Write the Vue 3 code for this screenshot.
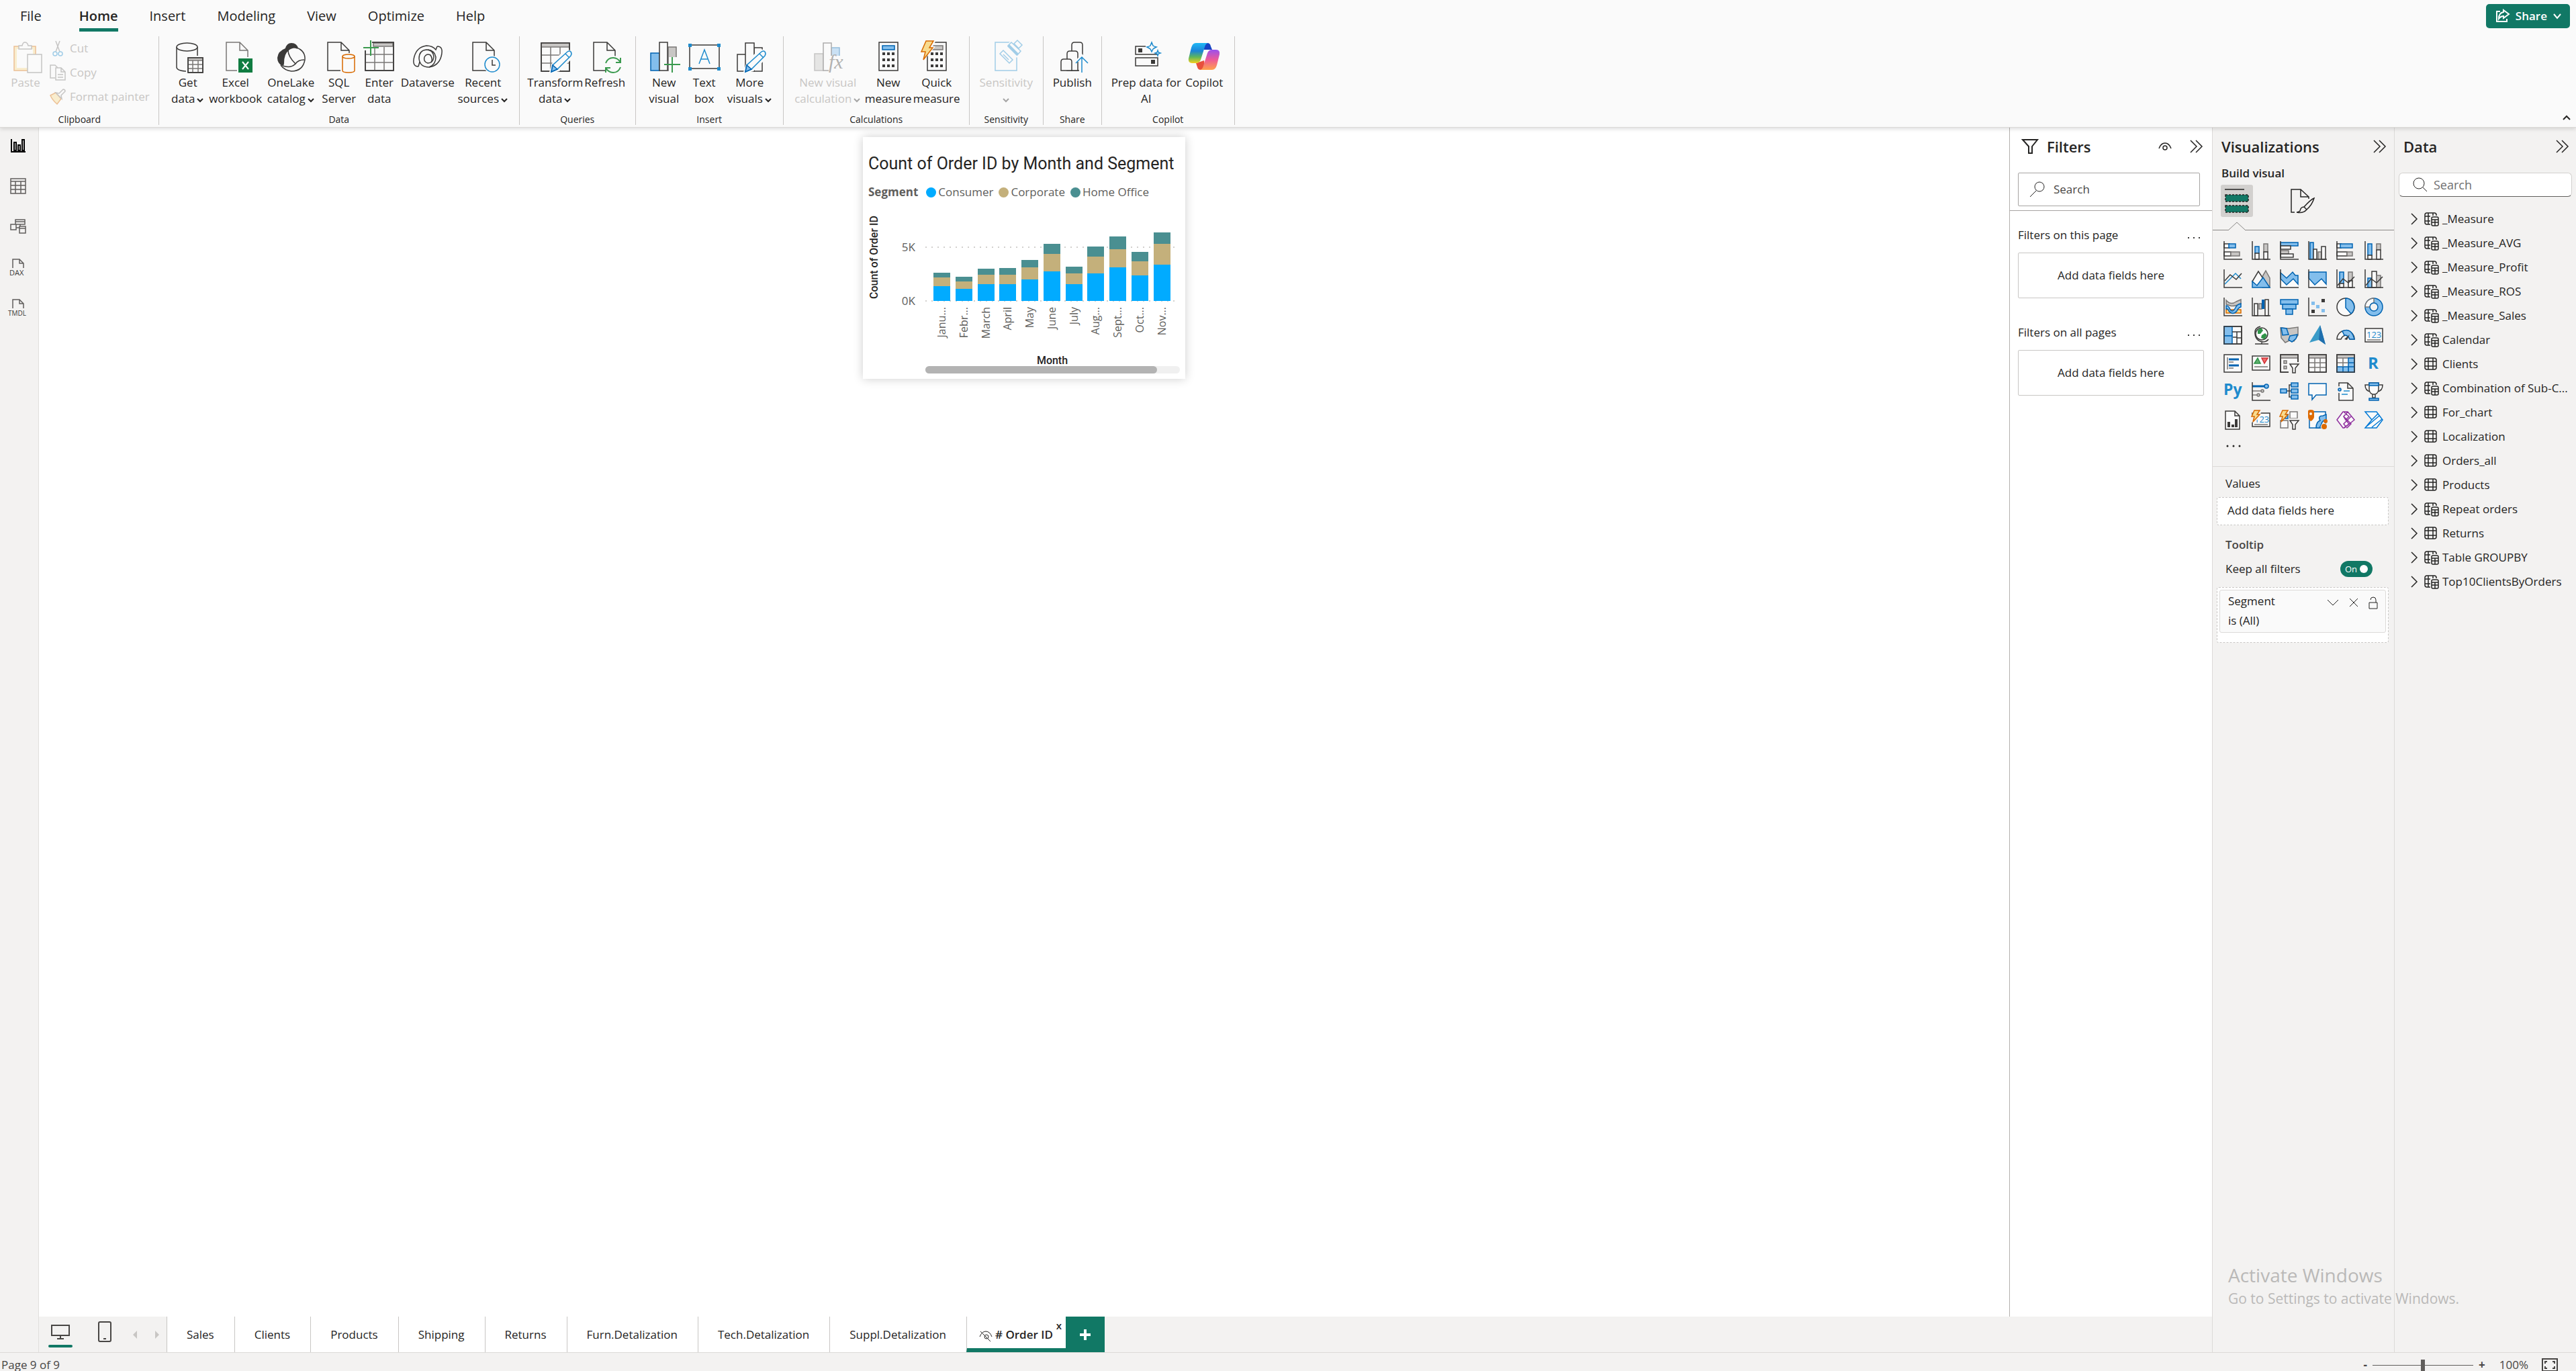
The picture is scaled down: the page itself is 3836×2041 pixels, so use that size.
<script setup>
const rect = (x, y, w, h) => `M${x} ${y}h${w}v${h}h${-w}z`
const circle = (cx, cy, r) => `M${cx - r} ${cy}a${r} ${r} 0 1 0 ${2 * r} 0a${r} ${r} 0 1 0 ${-2 * r} 0z`
const page = (x) => `M${x} 3h20l12 12v30h-32zM${x + 20} 3v12h12`

const menu = ['File', 'Home', 'Insert', 'Modeling', 'View', 'Optimize', 'Help']

const pencil = [
  ['h', 'M14 50L20 32L40 12L51 18L50 26L30 46z'],
  ['bw', 'M18 47L20 37L42 17Q45 15 47 17Q49 20 47 23L27 43z'],
  ['b', 'M18 47L20 37L27 43z'],
  ['bl', 'M39 20L45 26'],
]
const keypad = (x) => [0, 1, 2].flatMap((r) => [0, 1, 2].map((c) => ['k', rect(x + c * 7, 18 + r * 9, 4, 4)]))
const bolt = 'M8 1H19L13 11H18L4 29L7 17H1z'

const groups = [
  {
    name: 'Data', cls: 'data',
    items: [
      { lines: ['Get', 'data'], more: true, icon: [
        ['w', 'M7 10V40Q7 45 20 46H22V24H38V10'], ['w', 'M7 10a15.5 6 0 1 0 31 0a15.5 6 0 1 0 -31 0z'],
        ['h', rect(21, 23, 26, 26)], ['w', rect(24, 26, 22, 22)], ['g', rect(24, 26, 22, 4)], ['gl', 'M24 36H46M24 42H46M31 30V48M39 30V48'], ['l', rect(24, 26, 22, 22)]] },
      { lines: ['Excel', 'workbook'], icon: [
        ['gw', page(10)], ['h', rect(26, 25, 24, 24)], ['xl', rect(28, 27, 21, 21)], ['wl', 'M34 32L43 43M43 32L34 43']] },
      { lines: ['OneLake', 'catalog'], more: true, icon: [
        ['k', 'M4 26Q5 16 16 12Q18 4 25 4Q33 4 35 12Q26 10 21 15Q14 20 14 34Q14 38 11 38Q4 34 4 26z'],
        ['l', 'M33 11Q46 16 45 29Q42 46 25 46Q15 45 9 37M20 15Q20 24 31 35Q35 29 44 29M12 38Q24 42 31 35'],
        ['l', 'M16 12Q26 8 34 12']] },
      { lines: ['SQL', 'Server'], icon: [
        ['w', page(7)], ['h', rect(26, 19, 24, 30)], ['or', 'M29 24V45Q29 48 38 48Q47 48 47 45V24'], ['or', 'M29 24a9 3 0 1 0 18 0a9 3 0 1 0 -18 0z']] },
      { lines: ['Enter', 'data'], icon: [
        ['w', rect(3, 3, 42, 42)], ['g', rect(15, 4, 29, 5)], ['gl', 'M3 21H45M3 33H45M17 10V45M31 10V45'], ['l', rect(3, 3, 42, 42)],
        ['h', rect(-1, -1, 14, 16)], ['gr', 'M11 0V23M0 11H23']] },
      { lines: ['Dataverse'], icon: [
        ['l', 'M38 9Q48 9 44 24Q40 38 26 40Q12 40 11 27Q11 15 22 14Q32 14 33 25Q32 34 24 34Q17 32 19 25'],
        ['l', 'M10 39Q0 39 4 24Q8 10 22 8Q31 8 36 14L38 9M26 40Q36 36 36 25Q34 15 24 14M12 32L10 39M29 33Q32 28 28 22Q22 19 19 25']] },
      { lines: ['Recent', 'sources'], more: true, icon: [
        ['w', page(9)], ['h', circle(38, 36, 13)], ['bw', circle(38, 36, 11)], ['l', 'M38 29V37H43']] },
    ],
  },
  {
    name: 'Queries', cls: 'queries',
    items: [
      { lines: ['Transform', 'data'], more: true, icon: [
        ['w', rect(3, 4, 42, 42)], ['g', rect(3, 4, 42, 6)], ['gl', 'M3 22H45M3 34H45M17 10V46M31 10V46'], ['l', rect(3, 4, 42, 42)], ...pencil] },
      { lines: ['Refresh'], icon: [
        ['w', page(7)], ['h', circle(36, 37, 14)],
        ['gr', 'M25 34Q28 26 36 26Q43 26 47 33M47 26V33H40M47 40Q44 48 36 48Q29 48 25 41M25 48V41H32']] },
    ],
  },
  {
    name: 'Insert', cls: 'insert',
    items: [
      { lines: ['New', 'visual'], icon: [
        ['b', rect(4, 19, 13, 26)], ['g', rect(30, 10, 12, 35)], ['w', rect(17, 3, 12, 42)], ['h', rect(31, 25, 17, 24)], ['gr', 'M36 25V48M24 36H48']] },
      { lines: ['Text', 'box'], icon: [
        ['w', rect(2, 7, 44, 35)], ['bf', rect(0, 5, 5, 5)], ['bf', rect(43, 5, 5, 5)], ['bf', rect(0, 40, 5, 5)], ['bf', rect(43, 40, 5, 5)],
        ['bl', 'M16 35L24 14L32 35M19 28H29']] },
      { lines: ['More', 'visuals'], more: true, icon: [
        ['w', rect(6, 21, 13, 25)], ['w', rect(31, 11, 12, 35)], ['w', rect(18, 4, 13, 42)], ...pencil] },
    ],
  },
  {
    name: 'Calculations', cls: 'calculations',
    items: [
      { lines: ['New visual', 'calculation'], more: true, disabled: true, icon: [
        ['g', rect(4, 20, 13, 25)], ['b', rect(29, 11, 12, 18)], ['w', rect(17, 4, 12, 41)], ['h', rect(25, 23, 22, 26)], ['fx', 'fx', 25, 42, 30]] },
      { lines: ['New', 'measure'], icon: [['w', rect(10, 3, 28, 42)], ['b', rect(15, 8, 18, 6)], ...keypad(15)] },
      { lines: ['Quick', 'measure'], icon: [
        ['w', rect(10, 3, 28, 42)], ['g', rect(15, 8, 18, 6)], ...keypad(15), ['h', 'M6 -2H24L18 9H22L2 33H-2V16z'], ['oy', bolt]] },
    ],
  },
  {
    name: 'Sensitivity', cls: 'sensitivity',
    items: [
      { lines: ['Sensitivity', ''], more: true, disabled: true, icon: [
        ['bw', rect(8, 3, 32, 42)], ['h', 'M24 8L34 -2L52 14L40 26z'], ['bw', 'M15 20L20 15L34 29L29 34z'], ['bl', 'M20 21L28 29'],
        ['bw', 'M27 8L32 3L46 16L41 22z'], ['bf', 'M26 9L29 6L43 20L40 23z'], ['bw', 'M36 5L41 0L48 7L43 12z']] },
    ],
  },
  {
    name: 'Share', cls: 'share',
    items: [
      { lines: ['Publish'], icon: [
        ['w', 'M23 45V7Q23 3 27 3H35Q39 3 39 7V45z'], ['w', 'M16 45V20Q16 16 20 16H28Q32 16 32 20V45z'], ['w', 'M7 45V32Q7 28 11 28H19Q23 28 23 32V45z'],
        ['h', 'M38 20L50 32V48H34V32H27z'], ['bl', 'M38 25V48M29 34L38 25L47 34']] },
    ],
  },
  {
    name: 'Copilot', cls: 'copilot',
    items: [
      { lines: ['Prep data for', 'AI'], icon: [
        ['w', rect(8, 9, 32, 12)], ['w', rect(8, 26, 33, 12)], ['k', rect(12, 12, 6, 6)], ['k', rect(31, 29, 6, 6)], ['h', rect(23, 0, 26, 19)],
        ['bw', 'M32 3L34 8Q35 9 39 10Q35 12 34 13L32 17L30 13Q29 12 25 10Q29 9 30 8z'], ['bw', 'M41 15L42 18L45 19L42 20L41 23L40 20L37 19L40 18z']] },
      { lines: ['Copilot'], copilot: true },
    ],
  },
]

const clip = [
  ['Cut', [['gl', 'M9 1L15 17M15 1L9 17'], ['bl', circle(8, 20, 3)], ['bl', circle(16, 20, 3)]]],
  ['Copy', [['gl', 'M8 20H1V1H8L12 5'], ['gw', 'M9 5H17L23 11V23H9zM17 5V11H23M12 15H20M12 19H20']]],
  ['Format painter', [['oy', 'M1 10L9 6L17 15L11 23Q4 17 1 10z'], ['gw', 'M9 6L14 7L20 1Q23 1 23 4L17 10L18 15z']]],
]

const axis = ['l', 'M1 0V27H28']
const vizIcons = [
  ['Stacked bar chart', [['w', rect(1, 4, 8, 6)], ['b', rect(8, 4, 10, 6)], ['w', rect(1, 16, 10, 6)], ['g', rect(11, 16, 13, 6)], axis]],
  ['Stacked column chart', [['b', rect(5, 8, 6, 10)], ['w', rect(5, 18, 6, 9)], ['g', rect(18, 4, 6, 12)], ['w', rect(18, 16, 6, 11)], axis]],
  ['Clustered bar chart', [['b', rect(1, 2, 26, 5)], ['w', rect(1, 7, 15, 5)], ['g', rect(1, 14, 12, 5)], ['w', rect(1, 19, 19, 5)], axis]],
  ['Clustered column chart', [['b', rect(3, 2, 5, 25)], ['w', rect(8, 12, 5, 15)], ['g', rect(15, 16, 5, 11)], ['w', rect(20, 8, 6, 19)], axis]],
  ['100% stacked bar chart', [['w', rect(1, 4, 6, 6)], ['b', rect(6, 4, 18, 6)], ['w', rect(1, 16, 15, 6)], ['g', rect(16, 16, 8, 6)], axis]],
  ['100% stacked column chart', [['b', rect(5, 4, 6, 17)], ['w', rect(5, 21, 6, 6)], ['g', rect(18, 4, 6, 9)], ['w', rect(18, 13, 6, 14)], axis]],
  ['Line chart', [['bl', 'M2 22L18 6L26 14'], ['l', 'M2 17L10 8L19 15L27 6'], axis]],
  ['Area chart', [['g', 'M14 14L21 2L27 13V27H16z'], ['w', 'M1 18L10 3L20 18L8 26z'], ['b', 'M1 18L8 24L17 12L27 27H1z']]],
  ['Stacked area chart', [['h', rect(1, 12, 26, 15)], ['b', 'M1 5L10 13L19 4L23 9H27V22L20 14L10 23L1 14z'], axis]],
  ['100% stacked area chart', [['h', rect(1, 12, 26, 15)], ['b', 'M1 4H27V22L20 14L10 23L1 13z'], axis]],
  ['Line and stacked column chart', [['b', rect(5, 4, 6, 17)], ['w', rect(5, 21, 6, 6)], ['g', rect(18, 4, 6, 13)], ['w', rect(18, 17, 6, 10)], ['l', 'M2 24L10 14L18 20L27 11'], axis]],
  ['Line and clustered column chart', [['b', rect(5, 13, 6, 14)], ['w', rect(11, 3, 7, 24)], ['g', rect(18, 9, 6, 18)], ['l', 'M2 24L10 14L18 20L27 11'], axis]],
  ['Ribbon chart', [['oy', rect(4, 18, 22, 5)], ['g', 'M4 4Q11 12 19 6L26 3V9Q15 14 10 12L4 10z'], ['b', 'M4 12Q8 12 10 18Q14 23 18 15Q20 10 26 9V14Q22 15 20 20Q14 27 8 20Q7 16 4 17z'], axis]],
  ['Waterfall chart', [['w', rect(4, 9, 5, 18)], ['g', rect(11, 9, 4, 8)], ['bs', rect(15, 3, 4, 14)], ['w', rect(20, 3, 5, 24)], axis]],
  ['Funnel', [['b', rect(1, 3, 26, 7)], ['b', rect(4, 10, 20, 7)], ['b', rect(9, 17, 10, 8)]]],
  ['Scatter chart', [['b2', rect(5, 6, 5, 5)], ['k', rect(20, 2, 5, 5)], ['b2', rect(12, 11, 5, 5)], ['k', rect(5, 18, 5, 5)], ['b2', rect(20, 17, 5, 5)], axis]],
  ['Pie chart', [['w', circle(14, 14, 13)], ['b', 'M14 1A13 13 0 0 1 22 24L14 15z']]],
  ['Donut chart', [['b', circle(14, 14, 13)], ['gw', 'M14 1A13 13 0 0 0 1 14H8A6 6 0 0 1 14 8z'], ['b0', circle(14, 14, 6)]]],
  ['Treemap', [['w', rect(1, 1, 26, 26)], ['b', rect(1, 1, 12, 14)], ['b', rect(1, 15, 12, 12)], ['l', 'M13 9H27M20 9V27M20 18H27M14 17H20'], ['l', rect(1, 1, 26, 26)]]],
  ['Map', [['w', circle(15, 12, 9)], ['gf', 'M9 7Q12 3 15 4L17 7L13 12L9 12zM15 14L20 11L23 14L19 20L14 18z'], ['l', 'M13 1Q4 3 5 12Q6 23 17 24Q22 24 25 20M15 24V27M5 27H25']]],
  ['Filled map', [['g', 'M1 3L13 4L27 2V14L21 23L14 22L8 25L2 18z'], ['b', 'M2 3L10 4L13 13L4 14z'], ['b', 'M15 15L26 13L24 19L18 24L13 21z']]],
  ['Azure map', [['b3', 'M18 -1L26 28L16 21L2 25z'], ['b4', 'M18 -1L26 28L16 21z']]],
  ['Gauge', [['w', 'M1 20A13 13 0 0 1 27 20H20Q18 15 14 14Q9 15 7 20z'], ['b', 'M9 8Q20 3 25 14L27 20H20Q18 15 14 14L12 14z'], ['k', 'M20 13L16 21L12 20z']]],
  ['Card', [['w', rect(1, 4, 26, 20)], ['gl', 'M4 21H24'], ['num', '123', 3, 18, 13]]],
  ['Multi-row card', [['w', rect(1, 1, 26, 26)], ['gl', 'M6 5V23M8 12H15M8 21H15'], ['bk', 'M8 8H23M8 17H23']]],
  ['KPI', [['w', rect(1, 3, 26, 21)], ['gl', 'M4 19H24'], ['gt', 'M4 14L9 6L13 14z'], ['rt', 'M15 6H24L19 14z']]],
  ['Slicer', [['w', rect(1, 1, 26, 26)], ['g', rect(1, 1, 26, 5)], ['g', rect(6, 10, 4, 4)], ['g', rect(6, 18, 4, 4)], ['l', rect(1, 1, 26, 26)], ['h2', rect(13, 12, 17, 18)], ['w', 'M15 15H28L23 21V28H19V21z']]],
  ['Table', [['w', rect(1, 1, 26, 26)], ['g', rect(1, 1, 26, 5)], ['gl', 'M1 13H27M1 20H27M10 6V27M18 6V27'], ['l', rect(1, 1, 26, 26)]]],
  ['Matrix', [['w', rect(1, 1, 26, 26)], ['g', rect(1, 1, 26, 5)], ['b', rect(18, 6, 9, 21)], ['b', rect(1, 19, 17, 8)], ['gl', 'M1 13H18M10 6V19'], ['bd', 'M18 13H27M10 19V27M18 19H27'], ['l', rect(1, 1, 26, 26)]]],
  ['R script visual', [['big', 'R', 5, 22, 24]]],
  ['Python visual', [['big', 'Py', 0, 19, 23]]],
  ['Key influencers', [['bk', 'M1 6H20'], ['b', circle(22, 6, 3)], ['gl', 'M1 13H14M1 19H8'], ['g', circle(16, 13, 2)], ['g', circle(10, 19, 2)], axis]],
  ['Decomposition tree', [['l', 'M10 13H17M18 4H14V22H18'], ['b', rect(1, 10, 9, 6)], ['b', rect(17, 1, 10, 6)], ['b', rect(17, 10, 10, 6)], ['b', rect(17, 19, 10, 6)]]],
  ['Q&A', [['wb', 'M1 2H27V19H12L6 26V19H1z']]],
  ['Narrative', [['w', 'M4 1H17L25 9V27H4zM17 1V9H25'], ['h2', circle(4, 11, 5)], ['b', circle(5, 11, 2)], ['bl', 'M11 13H20M8 18H17']]],
  ['Goals', [['w', 'M6 4H1Q1 13 9 14M22 4H27Q27 13 19 14'], ['w', 'M7 1H21V11Q20 18 14 18Q8 18 7 11zM12 18V23H16V18'], ['b', rect(7, 1, 14, 4)], ['b', 'M7 27V24H21V27z']]],
  ['Paginated report', [['w', 'M3 1H17L24 8V28H3zM17 1V8H24'], ['k', rect(6, 17, 4, 8)], ['k', rect(12, 21, 4, 4)], ['k', rect(17, 13, 4, 12)]]],
  ['Card (new)', [['w', rect(1, 4, 26, 20)], ['gl', 'M4 21H24'], ['num', '123', 4, 18, 13], ['h2', 'M3 -2H16L10 13L0 18H-2z'], ['oy', 'M4 0H12L8 6H12L2 17L4 9H0z']]],
  ['Slicer (new)', [['gw', rect(15, 2, 11, 10)], ['gw', rect(1, 15, 11, 11)], ['b', rect(8, 6, 4, 6)], ['h2', rect(13, 12, 17, 18)], ['w', 'M15 15H28L23 21V28H19V21z'], ['oy', 'M4 0H12L8 6H12L2 17L4 9H0z']]],
  ['ArcGIS Maps', [['wb', rect(2, 2, 24, 24)], ['b', 'M12 26Q12 17 18 15Q14 8 22 8L27 6V14Q21 15 20 20L17 26z'], ['of', 'M0 1Q0 -1 4 -1Q9 -1 9 2V10Q8 14 4 16Q0 13 0 10z'], ['h2', circle(4, 5, 2)], ['of', circle(26, 16, 3)], ['h2', circle(24, 24, 5)], ['of', circle(24, 24, 4)]]],
  ['Power Apps', [['pu', 'M10 2L1 14L10 26H12L27 14L17 2zM11 2L19 9L14 14L19 20L11 26M17 2L11 9L22 20L16 26M11 9L14 14M22 9L11 20L16 26']]],
  ['Power Automate', [['pa', 'M1 2H18L27 14L18 26H1L11 14zM11 14L20 5M3 24L22 8M11 25L26 13']]],
]

const tableRows = [
  ['_Measure', 1], ['_Measure_AVG', 1], ['_Measure_Profit', 1], ['_Measure_ROS', 1], ['_Measure_Sales', 1],
  ['Calendar', 1], ['Clients', 0], ['Combination of Sub-C...', 1], ['For_chart', 0], ['Localization', 0],
  ['Orders_all', 0], ['Products', 0], ['Repeat orders', 1], ['Returns', 0], ['Table GROUPBY', 1], ['Top10ClientsByOrders', 1],
]

const rail = [
  ['Report view', [['rk', 'M2 2V21H23M6 7H9V19H6zM12 11H15V19H12zM18 3H21V19H18z']]],
  ['Table view', [['rg', 'M1 1H23V23H1zM1 5H23M1 11H23M1 17H23M8 5V23M16 5V23']]],
  ['Model view', [['rg', 'M8 2H22V9H8zM1 9H9V17H1zM14 12H23V22H14zM15 9V12M9 14H14M8 5H22M14 15H23']]],
  ['DAX query view', [['rg', 'M4 14V1H14L20 7V14M14 1V7H20'], ['dax', 'DAX', -1, 25, 11]]],
  ['TMDL view', [['rg', 'M4 14V1H14L20 7V14M14 1V7H20'], ['dax', 'TMDL', -3, 25, 10]]],
]

const series = ['Consumer', 'Corporate', 'Home Office']
const months = [
  ['Janu...', 22, 13, 7], ['Febr...', 18, 11, 7], ['March', 25, 14, 9], ['April', 25, 14, 10], ['May', 32, 18, 11], ['June', 44, 26, 15],
  ['July', 25, 16, 10], ['Aug...', 41, 25, 15], ['Sept...', 50, 27, 19], ['Oct...', 38, 21, 14], ['Nov...', 54, 31, 17],
]
const bars = months.map(([name, a, b, c], i) => ({
  name,
  x: Math.round(105 + i * 32.75),
  parts: [[171 - a, a], [171 - a - b, b], [171 - a - b - c, c]],
}))

const pages = ['Sales', 'Clients', 'Products', 'Shipping', 'Returns', 'Furn.Detalization', 'Tech.Detalization', 'Suppl.Detalization']
</script>

<template>
  <div class="app">
    <header class="top">
      <nav class="menu" aria-label="Ribbon tabs">
        <button v-for="m in menu" :key="m" :class="['menu-item', { active: m === 'Home' }]">{{ m }}</button>
        <button class="share-btn">
          <svg width="24" height="24" viewBox="0 0 24 24"><path class="wl" d="M9 5H4V20H19V16M14 3L22 9L14 15V12Q10 12 7 16Q7 7 14 6z" /></svg>
          Share
          <svg width="14" height="14" viewBox="0 0 14 14"><path class="wl" d="M2 4L7 10L12 4" /></svg>
        </button>
      </nav>
      <div class="ribbon">
        <section class="group clipboard">
          <div class="tools">
            <button class="tool disabled" disabled>
              <svg class="tool-icon" viewBox="0 0 48 48">
                <path class="oy" d="M7 9H39V45H7z" /><path class="h" d="M11 13H35V41H11z" />
                <path class="gw" d="M14 13V8H19Q20 3 23 3Q27 3 28 8H33V13z" /><path class="gw" d="M27 21H48V48H27z" />
              </svg>
              <span>Paste</span>
            </button>
            <div class="clip-list">
              <button v-for="[name, shapes] in clip" :key="name" class="clip-item" disabled>
                <svg width="24" height="24" viewBox="0 0 24 24"><path v-for="([c, d], i) in shapes" :key="i" :class="c" :d="d" /></svg>
                {{ name }}
              </button>
            </div>
          </div>
          <h2 class="group-name">Clipboard</h2>
        </section>
        <section v-for="g in groups" :key="g.name" class="group">
          <div :class="['tools', 'cols-' + g.cls]">
            <button v-for="b in g.items" :key="b.lines.join()" :class="['tool', { disabled: b.disabled }]" :disabled="b.disabled">
              <svg v-if="b.copilot" class="tool-icon" viewBox="0 0 48 48">
                <defs>
                  <linearGradient id="copilot-cool" x1="0" y1="0" x2="0" y2="1"><stop offset="0" stop-color="#20b8f5" /><stop offset=".4" stop-color="#1b84d8" /><stop offset=".7" stop-color="#5fb75a" /><stop offset="1" stop-color="#f5cf1e" /></linearGradient>
                  <linearGradient id="copilot-warm" x1="0" y1="0" x2="0" y2="1"><stop offset="0" stop-color="#9a50ee" /><stop offset=".5" stop-color="#ee5a97" /><stop offset="1" stop-color="#ffa24a" /></linearGradient>
                </defs>
                <path class="cp-blue" d="M24 4H29Q33 4 34 9L36 14H24z" />
                <path class="cp-red" d="M12 34L24 30L26 44H19Q15 44 14 40z" />
                <path class="cp-cool" d="M10 4H30Q26 5 25 10L19 29Q17 34 12 34H6Q0 34 1 27L5 11Q7 4 12 4z" />
                <path class="cp-warm" d="M38 44H18Q22 43 23 38L29 19Q31 14 36 14H42Q48 14 47 21L43 37Q41 44 36 44z" />
              </svg>
              <svg v-else class="tool-icon" viewBox="0 0 48 48">
                <template v-for="(s, i) in b.icon" :key="i">
                  <text v-if="s.length > 2" :class="s[0]" :x="s[2]" :y="s[3]" :font-size="s[4]">{{ s[1] }}</text>
                  <path v-else :class="s[0]" :d="s[1]" />
                </template>
              </svg>
              <span>{{ b.lines[0] }}</span>
              <span v-if="b.lines.length > 1" class="line2">{{ b.lines[1] }}<svg v-if="b.more" width="12" height="12" viewBox="0 0 12 12"><path class="chev" d="M2 4L6 8L10 4" /></svg></span>
            </button>
          </div>
          <h2 class="group-name">{{ g.name }}</h2>
        </section>
        <button class="collapse" aria-label="Collapse ribbon"><svg width="14" height="10" viewBox="0 0 14 10"><path class="chev" d="M2 8L7 3L12 8" /></svg></button>
      </div>
    </header>

    <div class="body">
      <nav class="rail" aria-label="Views">
        <button v-for="[name, shapes] in rail" :key="name" :aria-label="name">
          <svg width="24" height="26" viewBox="0 0 24 26">
            <template v-for="(s, i) in shapes" :key="i">
              <text v-if="s.length > 2" :class="s[0]" :x="s[2]" :y="s[3]" :font-size="s[4]">{{ s[1] }}</text>
              <path v-else :class="s[0]" :d="s[1]" />
            </template>
          </svg>
        </button>
      </nav>

      <div class="center">
        <div class="work">
          <main class="canvas">
            <article class="card">
              <h1>Count of Order ID by Month and Segment</h1>
              <div class="legend">
                <b>Segment</b>
                <span v-for="(s, i) in series" :key="s"><i :class="'dot s' + i"></i>{{ s }}</span>
              </div>
              <svg class="chart" width="480" height="234" viewBox="0 0 480 234" role="img" aria-label="Stacked column chart">
                <path class="grid" d="M93 91H470M93 171H470" />
                <text class="tick" x="78" y="97" text-anchor="end">5K</text>
                <text class="tick" x="78" y="177" text-anchor="end">0K</text>
                <text class="axis-title" transform="translate(22 106) rotate(-90)" text-anchor="middle">Count of Order ID</text>
                <g v-for="b in bars" :key="b.name">
                  <rect v-for="([y, h], i) in b.parts" :key="i" :class="'s' + i" :x="b.x" :y="y" width="25" :height="h" />
                  <text class="tick month" :transform="`translate(${b.x + 18} 180) rotate(-90)`" text-anchor="end">{{ b.name }}</text>
                </g>
                <text class="axis-title" x="282" y="265" text-anchor="middle">Month</text>
              </svg>
              <div class="scroll"><div class="thumb"></div></div>
            </article>
          </main>

          <aside class="filters">
            <div class="pane-head">
              <svg width="26" height="24" viewBox="0 0 26 24"><path class="funnel" d="M2 2H24L16 12V22H11V12z" /></svg>
              <h2>Filters</h2>
              <button class="push" aria-label="Show filters"><svg width="20" height="14" viewBox="0 0 20 14"><path class="ic2" d="M1 10Q4 2 10 2Q16 2 19 10" /><circle class="ic2" cx="10" cy="9" r="3" /></svg></button>
              <button class="dbl" aria-label="Collapse filters"><svg width="20" height="20" viewBox="0 0 20 20"><path class="ic2" d="M2 1L11 10L2 19M10 1L19 10L10 19" /></svg></button>
            </div>
            <div class="fsearch">
              <svg width="24" height="24" viewBox="0 0 24 24"><circle class="ic" cx="15" cy="8" r="7" /><path class="ic" d="M10 14L1 23" /></svg>
              <input type="text" placeholder="Search" aria-label="Search filters" />
            </div>
            <hr />
            <section v-for="t in ['Filters on this page', 'Filters on all pages']" :key="t" class="fsec">
              <div class="fsec-head"><h3>{{ t }}</h3><button aria-label="More options"><svg width="18" height="4" viewBox="0 0 18 4"><path class="k" d="M0 1h2v2h-2zM8 1h2v2h-2zM16 1h2v2h-2z" /></svg></button></div>
              <div class="drop">Add data fields here</div>
            </section>
          </aside>
        </div>

        <footer class="tabs">
          <button class="view desk" aria-label="Desktop layout"><svg width="30" height="24" viewBox="0 0 30 24"><path class="vi" d="M2 2H28V17H2zM15 17V21M10 22H20" /></svg></button>
          <button class="view phone" aria-label="Mobile layout"><svg width="20" height="32" viewBox="0 0 20 32"><rect class="vi" x="1" y="1" width="18" height="29" rx="2" /><path class="vi" d="M8 26H12" /></svg></button>
          <button class="arrow" aria-label="Previous page"><svg width="8" height="12" viewBox="0 0 8 12"><path d="M7 0V12L1 6z" /></svg></button>
          <button class="arrow last" aria-label="Next page"><svg width="8" height="12" viewBox="0 0 8 12"><path d="M1 0V12L7 6z" /></svg></button>
          <button v-for="p in pages" :key="p" class="tab">{{ p }}</button>
          <button class="tab current">
            <svg width="20" height="20" viewBox="0 0 20 20"><path class="ic" d="M1 11Q4 3 10 3Q16 3 19 11M2 3L17 18" /><circle class="ic" cx="11" cy="11" r="3" /></svg>
            # Order ID<span class="close">x</span>
          </button>
          <button class="add" aria-label="New page"><svg width="18" height="18" viewBox="0 0 18 18"><path d="M7 1H11V7H17V11H11V17H7V11H1V7H7z" /></svg></button>
        </footer>
      </div>

      <div class="side">
        <aside class="viz">
          <div class="pane-head">
            <h2>Visualizations</h2>
            <button class="push" aria-label="Collapse visualizations"><svg width="20" height="20" viewBox="0 0 20 20"><path class="ic2" d="M2 1L11 10L2 19M10 1L19 10L10 19" /></svg></button>
          </div>
          <h3 class="build">Build visual</h3>
          <div class="modes">
            <button class="on" aria-label="Build visual"><svg width="36" height="36" viewBox="0 0 36 36"><path class="ic2" d="M0 1H29" /><rect class="slot" x="1" y="9" width="34" height="10" /><rect class="slot" x="1" y="25" width="34" height="10" /></svg></button>
            <button aria-label="Format visual"><svg width="36" height="36" viewBox="0 0 36 36"><path class="ic2" d="M6 35H1V1H15L27 12V15M15 1V12H27" /><path class="ic2" d="M35 14Q30 16 20 27L24 31Q32 24 35 14zM20 27Q15 27 14 33Q12 35 9 35Q19 37 24 31" /></svg></button>
          </div>
          <div class="notch"><span></span><svg width="24" height="13" viewBox="0 0 24 13"><path d="M0 12L12 1L24 12" /></svg><span class="rest"></span></div>
          <div class="icons">
            <button v-for="[name, shapes] in vizIcons" :key="name" :aria-label="name">
              <svg width="28" height="28" viewBox="0 0 28 28">
                <template v-for="(s, i) in shapes" :key="i">
                  <text v-if="s.length > 2" :class="s[0]" :x="s[2]" :y="s[3]" :font-size="s[4]">{{ s[1] }}</text>
                  <path v-else :class="s[0]" :d="s[1]" />
                </template>
              </svg>
            </button>
          </div>
          <button class="more" aria-label="More visuals"><svg width="22" height="4" viewBox="0 0 22 4"><circle cx="2" cy="2" r="1.5" /><circle cx="11" cy="2" r="1.5" /><circle cx="20" cy="2" r="1.5" /></svg></button>
          <div class="wells">
            <h3>Values</h3>
            <div class="well">Add data fields here</div>
            <h3 class="tooltip-head">Tooltip</h3>
            <div class="keep">
              <label for="keep">Keep all filters</label>
              <span class="toggle">On<input id="keep" type="checkbox" role="switch" checked /></span>
            </div>
            <div class="well tall">
              <div class="field">
                <div class="field-text">Segment<br />is (All)</div>
                <button aria-label="Expand"><svg width="18" height="18" viewBox="0 0 18 18"><path class="ic" d="M1 5L9 13L17 5" /></svg></button>
                <button aria-label="Remove"><svg width="12" height="12" viewBox="0 0 12 12"><path class="ic" d="M0 0L12 12M12 0L0 12" /></svg></button>
                <button aria-label="Lock filter"><svg width="14" height="18" viewBox="0 0 14 18"><path class="ic" d="M1 9H13V18H1zM3 5Q3 1 7 1Q11 1 11 5V9" /></svg></button>
              </div>
            </div>
          </div>
        </aside>

        <aside class="data">
          <div class="pane-head">
            <h2>Data</h2>
            <button class="push" aria-label="Collapse data"><svg width="20" height="20" viewBox="0 0 20 20"><path class="ic2" d="M2 1L11 10L2 19M10 1L19 10L10 19" /></svg></button>
          </div>
          <div class="dsearch">
            <svg width="22" height="22" viewBox="0 0 22 22"><circle class="ic" cx="9" cy="9" r="8" /><path class="ic" d="M15 15L21 21" /></svg>
            <input type="text" placeholder="Search" aria-label="Search data" />
          </div>
          <ul>
            <li v-for="[name, calc] in tableRows" :key="name">
              <button>
                <svg width="10" height="18" viewBox="0 0 10 18"><path class="ic2" d="M1 1L9 9L1 17" /></svg>
                <svg width="22" height="22" viewBox="0 0 22 22">
                  <rect class="ic2" x="1" y="2" width="17" height="17" rx="3" /><path class="ic2" d="M6 2V19M13 2V19M1 7H18M1 14H18" />
                  <template v-if="calc"><rect class="cover" x="9" y="6" width="14" height="17" /><rect class="ic2" x="11" y="8" width="10" height="13" rx="2" /><path class="ic2" d="M11 12H21M11 16H21M16 12V21" /></template>
                </svg>
                <span>{{ name }}</span>
              </button>
            </li>
          </ul>
        </aside>

        <div class="watermark"><p class="wm1">Activate Windows</p><p class="wm2">Go to Settings to activate Windows.</p></div>
      </div>
    </div>

    <div class="status">
      <span>Page 9 of 9</span>
      <div class="zoom">
        <button aria-label="Zoom out">-</button>
        <input type="range" min="0" max="100" value="50" aria-label="Zoom level" />
        <button aria-label="Zoom in">+</button>
        <span class="pct">100%</span>
        <button aria-label="Fit to page"><svg width="24" height="20" viewBox="0 0 24 20"><path class="vi" d="M1 1H23V19H1zM8 5H5V8M16 5H19V8M8 15H5V12M16 15H19V12" /></svg></button>
      </div>
    </div>
  </div>
</template>

<style>
html,
body {
  margin: 0;
}
</style>

<style scoped>
.app {
  display: flex;
  flex-direction: column;
  height: 100vh;
  overflow: hidden;
  background: #f3f2f1;
  color: #252423;
  font-family: "Open Sans", "Noto Sans", sans-serif;
  font-size: 17px;
  line-height: 24px;
}
* { box-sizing: border-box; }
button {
  margin: 0;
  padding: 0;
  border: 0;
  background: none;
  color: inherit;
  font: inherit;
}
svg { display: block; overflow: visible; flex: none; }
h1, h2, h3, p, ul { margin: 0; padding: 0; font-weight: 400; }
ul { list-style: none; }
input { font: inherit; color: inherit; min-width: 0; }

/* icon paints */
path, circle, rect { fill: none; stroke-width: 1.5; }
.l { stroke: #3b3a39; }
.w { fill: #fafafa; stroke: #3b3a39; }
.k { fill: #3b3a39; }
.h { fill: #fafafa; }
.h2 { fill: #f3f2f1; }
.g { fill: #c8c6c4; stroke: #797775; }
.gl { stroke: #797775; }
.gw { fill: #fafafa; stroke: #797775; }
.b { fill: #83beec; stroke: #0063b1; }
.b0 { fill: #f3f2f1; stroke: #0063b1; }
.b2 { fill: #83beec; }
.b3 { fill: #3a9bc8; }
.b4 { fill: #1f6fae; }
.bd, .bk { stroke: #0063b1; }
.bk { stroke-width: 3; }
.bs { fill: #0063b1; }
.wb { fill: #fafafa; stroke: #0063b1; }
.bf { fill: #1e8bcd; }
.bl { stroke: #1e8bcd; }
.bw { fill: #fafafa; stroke: #1e8bcd; }
.gr { stroke: #3a9a4e; stroke-width: 2; }
.gf { fill: #2f9448; }
.gt { fill: #5fae6e; stroke: #2f9448; }
.rt { fill: #f06a6a; stroke: #d13438; }
.or { fill: #fafafa; stroke: #d86a00; }
.oy { fill: #f8db8f; stroke: #d86a00; }
.of { fill: #dd6a00; }
.pu { fill: #fafafa; stroke: #8f2f9e; }
.pa { fill: #fafafa; stroke: #0078d4; }
.xl { fill: #107c41; }
.wl { stroke: #fff; stroke-width: 2; }
.chev { stroke: #252423; stroke-width: 2; }
.funnel { stroke: #252423; stroke-width: 2; }
.ic2 { stroke: #252423; }
.ic { stroke: #252423; stroke-width: 1; }
.rk { stroke: #000; stroke-width: 2; }
.rg { stroke: #605e5c; }
.vi { stroke: #484644; stroke-width: 2; }
.num { fill: #1e8bcd; }
.big { fill: #1e8bcd; font-weight: 700; }
.dax { fill: #3b3a39; }
.fx { fill: #484644; font-family: "Liberation Serif", serif; font-style: italic; }
.cp-blue { fill: #1643c4; }
.cp-red { fill: #e8503c; }
.cp-cool { fill: url(#copilot-cool); }
.cp-warm { fill: url(#copilot-warm); }

/* header */
.top {
  position: relative;
  z-index: 2;
  flex: none;
  height: 190px;
  background: #fafafa;
  border-bottom: 1px solid #dcdad8;
  box-shadow: 0 2px 6px rgba(0, 0, 0, .14);
}
.menu {
  display: flex;
  gap: 47px;
  height: 48px;
  padding: 0 9px 0 30px;
  font-size: 20px;
}
.menu-item {
  height: 47px;
  border: solid transparent;
  border-width: 5px 0;
}
.menu-item:first-child { margin-right: 9px; }
.menu-item.active { border-bottom-color: #117865; font-weight: 600; }
.share-btn {
  display: flex;
  align-items: center;
  gap: 8px;
  height: 36px;
  margin: 6px 0 0 auto;
  padding: 0 12px;
  border-radius: 5px;
  background: #117865;
  color: #fff;
  font-size: 17px;
  font-weight: 600;
}
.ribbon {
  display: flex;
  height: 132px;
  margin-top: 6px;
}
.group {
  display: flex;
  flex-direction: column;
  justify-content: space-between;
  padding: 0 12px;
  border-right: 1px solid #c8c6c4;
}
.group-name { font-size: 14px; line-height: 16px; text-align: center; }
.tools { display: grid; }
.cols-data { grid-template-columns: 62px 80px 85px 58px 62px 82px 83px; }
.cols-queries { grid-template-columns: 82px 66px; }
.cols-insert { grid-template-columns: 60px 60px 75px; }
.cols-calculations { grid-template-columns: 108px 72px 72px; }
.cols-sensitivity { grid-template-columns: 85px; }
.cols-share { grid-template-columns: 62px; }
.cols-copilot { grid-template-columns: 108px 65px; }
.tool {
  display: flex;
  flex-direction: column;
  align-items: center;
  padding-top: 6px;
  white-space: nowrap;
}
.tool-icon { width: 48px; height: 48px; margin-bottom: 3px; }
.line2 { display: flex; align-items: center; gap: 2px; height: 24px; }
.line2 svg { margin-top: 4px; }
.disabled, .clip-item { color: #c8c6c4; }
.disabled svg, .clip-item svg { opacity: .4; }
.group.clipboard { padding: 0 13px 0 14px; }
.clipboard .tools { grid-template-columns: 48px auto; column-gap: 12px; }
.clip-list { display: flex; flex-direction: column; }
.clip-item {
  display: flex;
  align-items: center;
  gap: 6px;
  height: 36px;
  white-space: nowrap;
}
.collapse { align-self: flex-end; margin: 0 7px 6px auto; }

/* body */
.body { display: flex; flex: 1; min-height: 0; }
.rail {
  display: flex;
  flex-direction: column;
  gap: 4px;
  flex: none;
  width: 58px;
  border-right: 1px solid #e1dfdd;
}
.rail button { display: flex; align-items: center; height: 56px; padding-left: 15px; }
.center { display: flex; flex-direction: column; flex: 1; min-width: 0; }
.work { display: flex; flex: 1; min-height: 0; }
.canvas { flex: 1; padding-top: 14px; background: #fff; }
.card {
  width: 480px;
  height: 360px;
  margin: 0 auto;
  background: #fff;
  box-shadow: 0 0 14px rgba(0, 0, 0, .2);
}
.card h1 {
  padding: 24px 8px 0;
  font-family: Roboto, "Open Sans", sans-serif;
  font-size: 25px;
  line-height: 32px;
  white-space: nowrap;
}
.legend {
  display: flex;
  align-items: center;
  gap: 8px;
  height: 24px;
  margin-top: 14px;
  padding-left: 8px;
  color: #605e5c;
  white-space: nowrap;
}
.legend b { margin-right: 4px; }
.legend span { display: flex; align-items: center; gap: 3px; }
.dot { width: 15px; height: 15px; border-radius: 50%; }
.dot.s0 { background: #01abff; }
.dot.s1 { background: #c4b07b; }
.dot.s2 { background: #4a8f91; }
rect.s0 { fill: #01abff; }
rect.s1 { fill: #c4b07b; }
rect.s2 { fill: #4a8f91; }
.chart { margin-top: -21px; }
.grid { stroke: #d2d0ce; stroke-width: 2; stroke-dasharray: 2 7; }
.tick { fill: #605e5c; font-size: 17px; }
.month { font-size: 16px; }
.axis-title { fill: #252423; font-family: Roboto, sans-serif; font-size: 16px; font-weight: 500; }
.scroll {
  height: 11px;
  margin: 34px 8px 0 93px;
  border-radius: 6px;
  background: #f0f0f0;
}
.thumb { width: 91%; height: 11px; border-radius: 6px; background: #b3b3b3; }

/* panes */
.pane-head { display: flex; align-items: center; height: 56px; }
.pane-head h2 { font-size: 22px; font-weight: 600; }
.push { margin-left: auto; }
.filters { flex: none; width: 302px; background: #fff; border-left: 1px solid #b3b0ad; }
.filters .pane-head { padding: 0 14px 0 17px; }
.filters h2 { margin-left: 12px; }
.dbl { margin-left: 26px; }
.fsearch {
  display: flex;
  align-items: center;
  gap: 12px;
  height: 50px;
  margin: 11px 18px 0 12px;
  padding-left: 16px;
  border: 1px solid #a6a4a2;
  border-radius: 2px;
}
.fsearch input, .dsearch input { flex: 1; border: 0; padding: 0; outline: 0; background: none; }
input::placeholder { color: #484644; opacity: 1; }
hr { margin: 6px 0 0; border: 0; border-top: 1px solid #a6a4a2; }
.fsec { padding: 24px 12px 15px; }
.fsec-head { display: flex; align-items: center; justify-content: space-between; padding-right: 6px; margin-bottom: 14px; }
.fsec-head button { padding-top: 8px; }
.fsec h3 { font-size: 17px; }
.drop {
  display: flex;
  align-items: center;
  justify-content: center;
  height: 68px;
  border: 1px solid #c8c6c4;
  border-radius: 2px;
}
.side { position: relative; display: flex; flex: none; }
.viz, .data { width: 271px; border-left: 1px solid #dcdad8; }
.viz .pane-head { padding: 0 12px 0 13px; }
.build { padding-left: 13px; font-size: 17px; font-weight: 600; }
.modes { display: flex; gap: 50px; margin-top: 5px; padding-left: 12px; }
.modes button { display: flex; align-items: center; justify-content: center; width: 48px; height: 48px; border-radius: 3px; }
.modes .on { background: #d2d0ce; }
.slot { fill: #117865; stroke: #252423; stroke-dasharray: 3 2; }
.notch { display: flex; align-items: flex-end; height: 20px; }
.notch span { width: 24px; border-top: 1px solid #8a8886; }
.notch .rest { flex: 1; }
.notch path { stroke: #8a8886; stroke-width: 1; }
.icons { display: grid; grid-template-columns: repeat(6, 28px); gap: 14px; margin: 16px 0 0 16px; }
.more { display: flex; align-items: center; height: 24px; margin: 13px 0 18px 20px; }
.more circle { fill: #252423; }
.wells { padding: 13px 8px 0 6px; border-top: 1px solid #dcdad8; }
.wells h3 { padding-left: 13px; font-size: 17px; }
.well { height: 42px; margin-top: 8px; padding: 0 15px; border: 1px dashed #c8c6c4; border-radius: 3px; background: #fff; line-height: 38px; }
.wells .tooltip-head { margin-top: 17px; font-weight: 600; color: #484644; }
.keep { display: flex; align-items: center; justify-content: space-between; margin: 12px 24px 0 13px; }
.toggle { display: flex; align-items: center; justify-content: space-between; width: 48px; height: 24px; padding: 0 7px; border-radius: 12px; background: #117865; color: #fff; font-size: 13px; }
.toggle input { appearance: none; width: 12px; height: 12px; margin: 0; border-radius: 50%; background: #fff; }
.well.tall { height: 83px; margin-top: 15px; padding: 3px; }
.field { display: flex; height: 64px; padding: 1px 11px 0 12px; border: 1px solid #dcdad8; border-radius: 3px; background: #fafafa; line-height: 29px; }
.field-text { flex: 1; }
.field button { display: flex; align-items: center; height: 34px; margin-left: 16px; }

.data .pane-head { padding: 0 11px 0 13px; }
.dsearch { display: flex; align-items: center; gap: 9px; height: 36px; margin: 11px 6px 0; padding-left: 20px; border: 1px solid #d2d0ce; border-bottom-color: #605e5c; border-radius: 6px; background: #fff; font-size: 18px; }
.dsearch input::placeholder { color: #707070; }
.data ul { margin-top: 15px; }
.data li button { display: flex; align-items: center; width: 100%; height: 36px; padding-left: 24px; }
.data li svg:nth-child(2) { margin: 0 5px 0 10px; }
.cover { fill: #f3f2f1; }
.data li span { white-space: nowrap; }

.watermark { position: absolute; left: 24px; bottom: 66px; color: #bab9b8; white-space: nowrap; pointer-events: none; }
.wm1 { font-size: 28px; line-height: 36px; }
.wm2 { margin-top: 3px; font-size: 21px; line-height: 28px; }

/* page tabs */
.tabs { display: flex; flex: none; height: 53px; }
.view { display: flex; justify-content: center; border-bottom: 7px solid transparent; }
.desk { position: relative; width: 63px; padding-top: 11px; }
.desk::after { content: ""; position: absolute; left: 14px; right: 13px; bottom: 0; height: 4px; border-radius: 2px; background: #117865; }
.phone { width: 70px; padding-top: 7px; }
.arrow { display: flex; align-items: center; justify-content: center; width: 20px; }
.arrow.last { margin: 0 4px 0 13px; }
.arrow path { fill: #c8c6c4; }
.tab { flex: none; padding: 0 30px 0 29px; border-left: 1px solid #c8c6c4; background: #fff; white-space: nowrap; }
.current { position: relative; display: flex; align-items: center; gap: 4px; padding: 6px 19px 0 18px; border-bottom: 6px solid #117865; font-weight: 600; }
.current svg { margin-top: 4px; }
.close { position: absolute; top: 3px; right: 6px; line-height: 20px; font-size: 15px; }
.add { display: flex; align-items: center; justify-content: center; width: 58px; background: #117865; }
.add path { fill: #fff; }

/* status */
.status { display: flex; justify-content: space-between; flex: none; height: 28px; padding: 6px 27px 0 2px; border-top: 1px solid #dcdad8; color: #484644; overflow: hidden; }
.zoom { display: flex; height: 24px; align-items: center; gap: 8px; }
.zoom button { font-weight: 700; }
.zoom input { appearance: none; width: 150px; height: 18px; margin: 0; background: linear-gradient(#605e5c, #605e5c) center / 100% 1px no-repeat; }
.zoom input::-webkit-slider-thumb { appearance: none; width: 6px; height: 17px; background: #605e5c; }
.pct { margin: 0 12px 0 13px; }
</style>
